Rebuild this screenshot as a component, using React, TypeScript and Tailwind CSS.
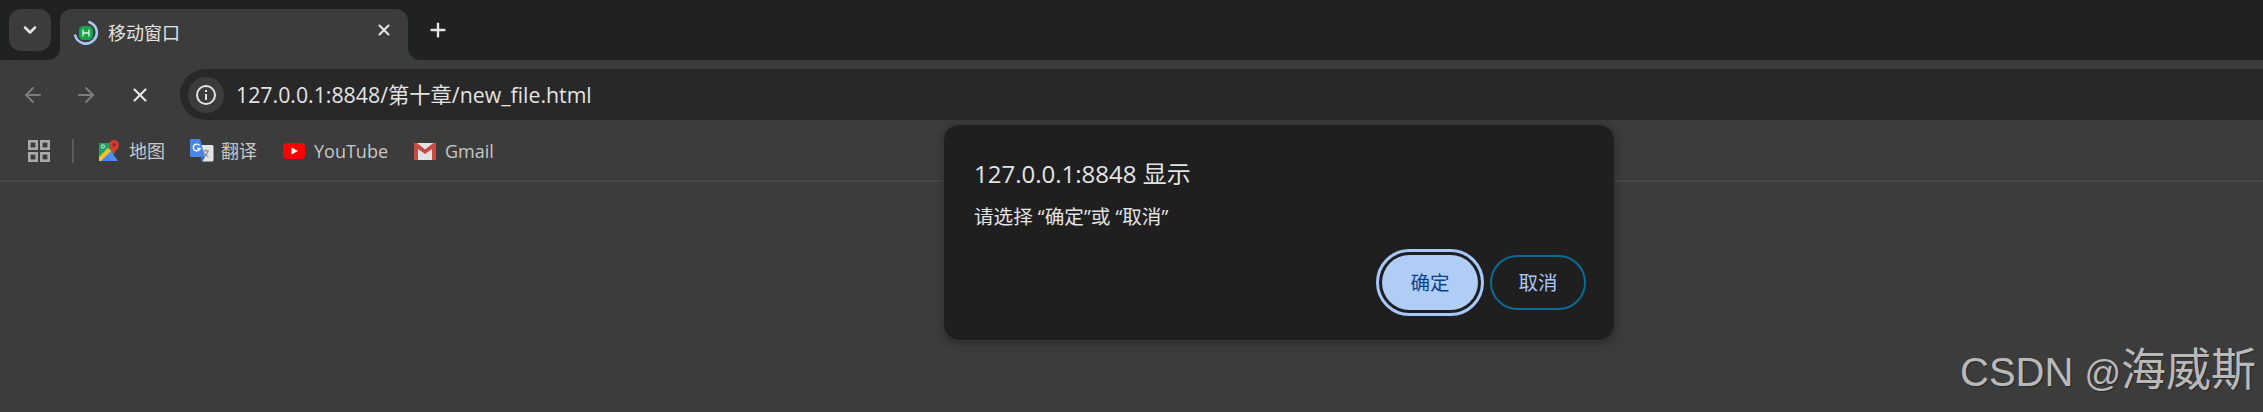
import { ArrowLeft, ArrowRight, ChevronDown, Plus, X } from "lucide-react";

const ui = "font-['Open_Sans','Noto_Sans_CJK_SC',sans-serif]";

function TabFavicon() {
  return (
    <svg width="26" height="26" viewBox="0 0 26 26" className="shrink-0">
      <path d="M16.5 2.2A11 11 0 1 1 2.2 15.5" fill="none" stroke="#a8c7fa" strokeWidth="2.6" strokeLinecap="round" />
      <rect x="6" y="6" width="14" height="14" rx="4.5" fill="#16a34a" />
      <path d="M10 9.5v7M16 9.5v7M10 13h6" stroke="#e8f5ec" strokeWidth="1.3" fill="none" />
    </svg>
  );
}

function MapsIcon() {
  return (
    <svg width="22" height="22" viewBox="0 0 22 22">
      <path d="M1 3h15v7l-4 9H1z" fill="#1fa463" />
      <path d="M8 14 1 21h12z" fill="#4285f4" />
      <path d="M13 11l7 10h-7l-5-7z" fill="#4f8df5" />
      <path d="M1 17 10 8l3 3-10 10H1z" fill="#fbc02d" />
      <circle cx="5" cy="6.500" r="1.600" fill="none" stroke="#e8f5ec" strokeWidth="0.9" />
      <path d="M16 0a5 5 0 0 1 5 5c0 3.500-3.500 5-5 10-1.500-5-5-6.500-5-10a5 5 0 0 1 5-5z" fill="#d33b35" />
      <circle cx="16" cy="5" r="1.700" fill="#8f2a26" />
    </svg>
  );
}

function TranslateIcon() {
  return (
    <svg width="24" height="24" viewBox="0 0 24 24">
      <path d="M10 6h12a1.500 1.500 0 0 1 1.500 1.500V21a1.500 1.500 0 0 1-1.500 1.500H12z" fill="#e3e3e3" />
      <path d="M16 10v1.500M13 12h6M18 12c-.8 3-2.500 5-5 6M14 13.500c.8 2 2.500 3.500 4.500 4.500" stroke="#8a8a8a" strokeWidth="1.100" fill="none" />
      <path d="M1.500 0H10l5 18H1.500A1.500 1.500 0 0 1 0 16.500V1.500A1.500 1.500 0 0 1 1.500 0z" fill="#4a86e8" />
      <path d="M11 18h4l-3 5z" fill="#3367c8" />
      <path d="M9.500 6.500A3.400 3.400 0 1 0 10 9.500H7" fill="none" stroke="#fff" strokeWidth="1.400" />
    </svg>
  );
}

function YouTubeIcon() {
  return (
    <svg width="22" height="16" viewBox="0 0 22 16">
      <rect width="22" height="16" rx="4" fill="#f00" />
      <path d="M8.500 4.500 15 8l-6.500 3.500z" fill="#fff" />
    </svg>
  );
}

function GmailIcon() {
  return (
    <svg width="22" height="17" viewBox="0 0 22 17">
      <rect width="22" height="17" rx="1" fill="#e3e3e3" />
      <path d="M0 1v15a1 1 0 0 0 1 1h3V6l7 5 7-5v11h3a1 1 0 0 0 1-1V1a1 1 0 0 0-1-1h-1.500L11 6.500 3 0H1a1 1 0 0 0-1 1z" fill="#c94a42" />
    </svg>
  );
}

function AppsIcon() {
  return (
    <svg width="22" height="22" viewBox="0 0 22 22" fill="none" stroke="#a9a9a9" strokeWidth="2.600">
      <rect x="1.300" y="1.300" width="7.400" height="7.400" />
      <rect x="13.300" y="1.300" width="7.400" height="7.400" />
      <rect x="1.300" y="13.300" width="7.400" height="7.400" />
      <rect x="13.300" y="13.300" width="7.400" height="7.400" />
    </svg>
  );
}

function InfoIcon() {
  return (
    <svg width="22" height="22" viewBox="0 0 22 22" fill="none" stroke="#e3e3e3">
      <circle cx="11" cy="11" r="9" strokeWidth="2" />
      <path d="M11 10v6" strokeWidth="2" />
      <path d="M11 6v2" strokeWidth="2" />
    </svg>
  );
}

function Bookmark({ icon, label, width }: { icon: React.ReactNode; label: string; width: string }) {
  return (
    <div className={`flex items-center ${width}`}>
      <div className="w-[31px] shrink-0 flex items-center">{icon}</div>
      <span className="text-[18px] leading-none text-[#c7c7c7] whitespace-nowrap">{label}</span>
    </div>
  );
}

export default function App() {
  return (
    <div className={`relative h-[412px] w-full overflow-hidden bg-[#3c3c3c] ${ui}`}>
      {/* tab strip */}
      <div className="flex h-[60px] items-start bg-[#202221] pt-[9px] pl-[9px]">
        <div className="flex h-[42px] w-[42px] items-center justify-center rounded-[12px] bg-[#3c3c3c] text-[#e3e3e3]">
          <ChevronDown size={20} strokeWidth={3} />
        </div>
        <div className="relative ml-[9px] flex h-[51px] w-[348px] items-center rounded-t-[12px] bg-[#3c3c3c] pl-[13px] pb-[4px]">
          <TabFavicon />
          <span className="ml-[9px] text-[18px] leading-none text-[#e3e3e3]">移动窗口</span>
          <X size={18} strokeWidth={2.8} className="absolute right-[15px] top-[12px] text-[#e3e3e3]" />
          <svg width="12" height="12" viewBox="0 0 12 12" className="absolute -left-[12px] bottom-0">
            <path d="M12 0v12H0A12 12 0 0 0 12 0z" fill="#3c3c3c" />
          </svg>
          <svg width="12" height="12" viewBox="0 0 12 12" className="absolute -right-[12px] bottom-0">
            <path d="M0 0v12h12A12 12 0 0 1 0 0z" fill="#3c3c3c" />
          </svg>
        </div>
        <div className="ml-[20px] flex h-[42px] w-[20px] items-center justify-center text-[#e3e3e3]">
          <Plus size={22} strokeWidth={2.6} className="shrink-0" />
        </div>
      </div>

      {/* toolbar */}
      <div className="rounded-tl-[16px] bg-[#3c3c3c] pt-[9px]">
        <div className="flex h-[51px] items-center">
          <div className="flex w-[180px] shrink-0 items-center pl-[21px]">
            <ArrowLeft size={24} strokeWidth={2} className="text-[#7c7c7c]" />
            <ArrowRight size={24} strokeWidth={2} className="ml-[29px] text-[#7c7c7c]" />
            <X size={22} strokeWidth={2.4} className="ml-[31px] text-[#e3e3e3]" />
          </div>
          <div className="flex h-[51px] flex-1 items-center rounded-l-full bg-[#282828] pl-[8px]">
            <div className="flex h-[36px] w-[36px] items-center justify-center rounded-full bg-[#3c3c3c]">
              <InfoIcon />
            </div>
            <span className="ml-[12px] text-[21.3px] leading-none text-[#e3e3e3]">127.0.0.1:8848/第十章/new_file.html</span>
          </div>
        </div>

        {/* bookmarks */}
        <div className="flex h-[60px] items-center pl-[28px] pt-[2px]">
          <AppsIcon />
          <div className="ml-[22px] mr-[24px] h-[24px] w-[2px] bg-[#5a5a5a]" />
          <Bookmark icon={<MapsIcon />} label="地图" width="w-[92px]" />
          <Bookmark icon={<TranslateIcon />} label="翻译" width="w-[93px]" />
          <Bookmark icon={<YouTubeIcon />} label="YouTube" width="w-[131px]" />
          <Bookmark icon={<GmailIcon />} label="Gmail" width="w-[90px]" />
        </div>
        <div className="h-[2px] bg-[#484848]" />
      </div>

      {/* alert dialog */}
      <div className="absolute left-[943px] top-[124px] flex h-[217px] w-[672px] flex-col rounded-[16px] border border-[#383838] bg-[#1f1f1f] pl-[30px] pr-[28px] pt-[32px] shadow-[0_2px_10px_rgba(0,0,0,0.3)]">
        <div className="text-[24px] leading-[34px] text-[#e3e3e3]">127.0.0.1:8848 显示</div>
        <div className="mt-[13px] text-[19.6px] leading-[26px] text-[#e3e3e3]">请选择 “确定”或 “取消”</div>
        <div className="mt-auto mb-[30px] flex justify-end gap-[12px]">
          <button className="h-[55px] w-[96px] rounded-full bg-[#b0cdf6] text-[19.5px] text-[#0b3f8a] outline-[3px] outline-offset-[3px] outline-[#a8c7fa]">确定</button>
          <button className="h-[55px] w-[96px] rounded-full border-2 border-[#0a6b94] bg-transparent text-[19.5px] text-[#a8c7fa]">取消</button>
        </div>
      </div>

      {/* watermark */}
      <div className="absolute left-[1960px] top-[345px] whitespace-nowrap font-['Liberation_Sans','Noto_Sans_CJK_SC',sans-serif] text-[40px] leading-[52px] text-[#b9b9b9] [text-shadow:1px_1px_1px_rgba(0,0,0,0.35)]">CSDN <span className="text-[36px]">@</span><span className="text-[45px]">海威斯</span></div>
    </div>
  );
}
